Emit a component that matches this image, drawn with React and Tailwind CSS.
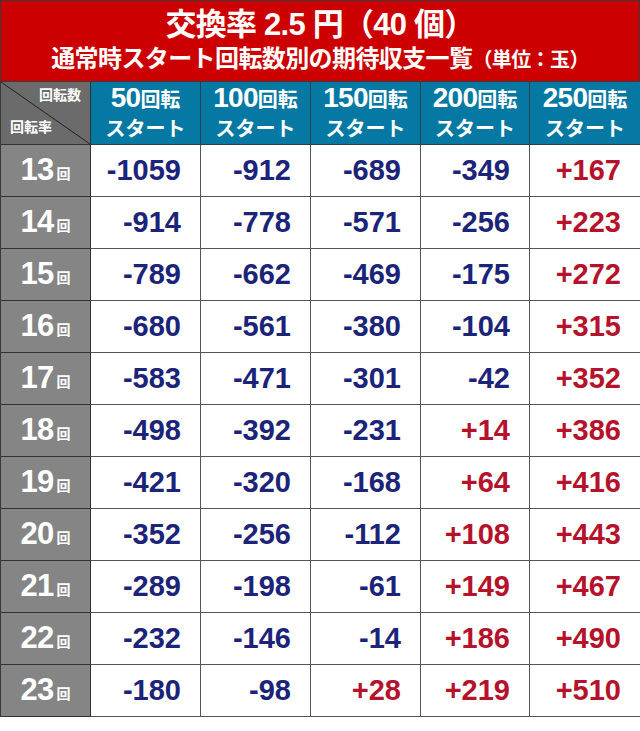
import React from 'react';

var cols = [50, 100, 150, 200, 250];
var rows = [
  [13, [-1059, -912, -689, -349, 167]],
  [14, [-914, -778, -571, -256, 223]],
  [15, [-789, -662, -469, -175, 272]],
  [16, [-680, -561, -380, -104, 315]],
  [17, [-583, -471, -301, -42, 352]],
  [18, [-498, -392, -231, 14, 386]],
  [19, [-421, -320, -168, 64, 416]],
  [20, [-352, -256, -112, 108, 443]],
  [21, [-289, -198, -61, 149, 467]],
  [22, [-232, -146, -14, 186, 490]],
  [23, [-180, -98, 28, 219, 510]],
];

var font = { fontFamily: '"Liberation Sans", "Noto Sans CJK JP", sans-serif' };

export default function App() {
  return (
    <div className="w-[640px] h-[731px] bg-white" style={font}>
      <div className="h-[82px] bg-[#cc0000] border border-[#3a3a3a] flex flex-col items-center justify-center text-white font-bold">
        <div className="text-[31px] leading-[36px] tracking-tight">交換率 2.5 円（40 個）</div>
        <div className="text-[24px] leading-[32px] tracking-tight">
          通常時スタート回転数別の期待収支一覧<span className="text-[20px]">（単位：玉）</span>
        </div>
      </div>
      <div className="grid grid-cols-[90px_110px_110px_110px_109px_111px] border-l border-[#3a3a3a]">
        <div className="relative h-[63px] bg-[#6b6b6b] border-r border-b border-[#333] text-white text-[14px] font-bold">
          <svg className="absolute inset-0" width="89" height="62">
            <line x1="0" y1="0" x2="89" y2="62" stroke="#222" strokeWidth="1" />
          </svg>
          <span className="absolute right-[9px] top-[3px]">回転数</span>
          <span className="absolute left-[9px] bottom-[6px]">回転率</span>
        </div>
        {cols.map(function(c) {
          return (
            <div key={c} className="h-[63px] bg-[#0579a3] border-r border-b border-[#2d3f4a] flex flex-col items-center justify-center text-white font-bold">
              <div className="leading-[28px]"><span className="text-[28px] tracking-tight">{c}</span><span className="text-[20px]">回転</span></div>
              <div className="text-[20px] leading-[26px]">スタート</div>
            </div>
          );
        })}
        {rows.map(function(r) {
          return (
            <React.Fragment key={r[0]}>
              <div className="h-[52px] bg-[#858585] border-r border-b border-[#333] flex items-center justify-center text-white font-bold">
                <span className="text-[31px] tracking-tight">{r[0]}</span>
                <span className="text-[14px] ml-[3px] mt-[8px]">回</span>
              </div>
              {r[1].map(function(v, i) {
                var pos = v > 0;
                return (
                  <div key={i} className={'h-[52px] border-r border-b border-[#555] flex items-center justify-end pr-[19px] text-[29px] font-bold ' + (pos ? 'text-[#b5122b]' : 'text-[#1b2478]')}>
                    {pos ? '+' + v : v}
                  </div>
                );
              })}
            </React.Fragment>
          );
        })}
      </div>
    </div>
  );
}
